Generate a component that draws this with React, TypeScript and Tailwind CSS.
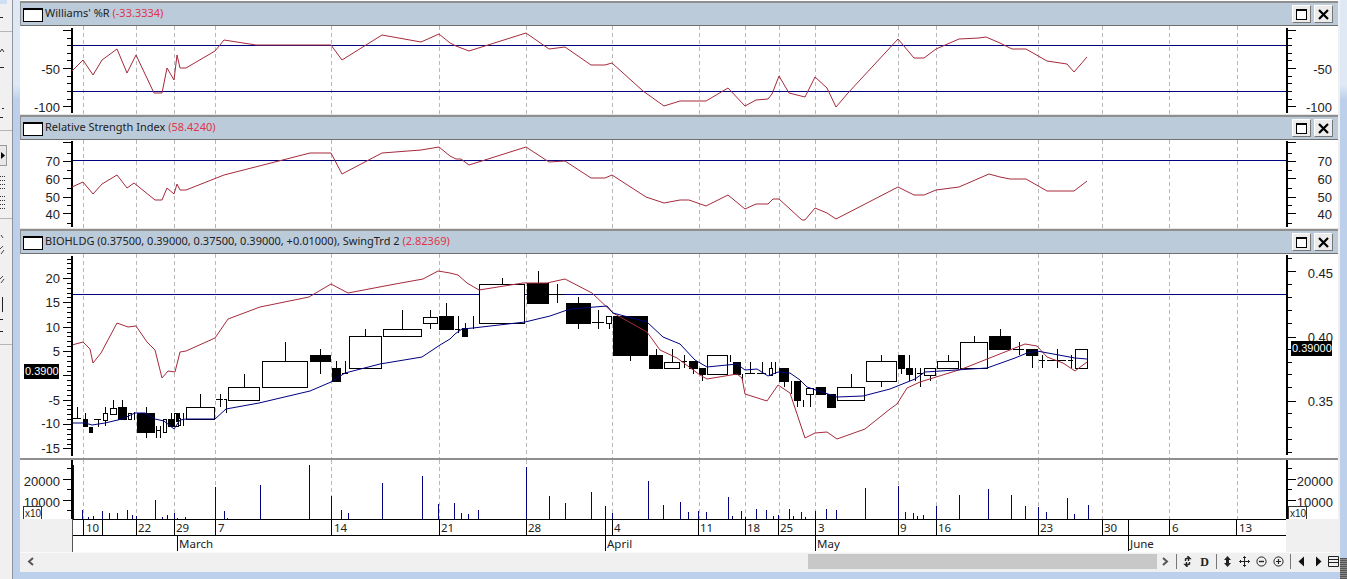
import React from 'react';

const FONT_AXIS = '"Liberation Sans", Arial, sans-serif';
const NAVY = '#000080';
const RED = '#a52a3c';

const gridX = [83, 136, 174, 215, 331, 439, 526, 612, 699, 745, 779, 815, 898, 936, 1038, 1102, 1169, 1237];

const williams = '72,71 83,60 93,75 102,60 117,49 127,73 136,55 154,93 162,93 167,68 174,80 177,55 180,68 186,68 215,51 224,40 256,45 331,45 342,60 382,35 421,42 439,34 450,43 456,46 469,51 526,33 549,49 565,47 591,65 605,65 612,63 643,91 664,106 680,101 706,101 728,88 745,106 756,100 768,99 772,94 779,76 789,93 805,97 815,77 827,88 836,107 848,93 873,66 898,39 914,58 924,58 936,49 959,39 979,38 986,37 1000,43 1012,49 1026,49 1047,61 1067,64 1074,72 1087,57';

const rsi = '72,187 83,182 93,194 102,184 117,175 127,188 134,183 155,200 162,200 167,188 174,194 177,184 180,190 186,190 224,175 310,153 331,153 342,174 382,153 421,150 439,147 450,156 456,159 461,159 469,165 526,147 549,162 565,161 591,178 605,178 612,175 646,197 664,203 680,200 689,200 706,206 728,195 745,209 756,204 768,204 773,199 779,199 802,220 805,220 815,208 827,213 836,219 898,187 914,195 924,195 936,190 959,187 989,174 1000,177 1010,179 1026,179 1047,191 1074,191 1087,181';

const swing = '72,345 83,342 90,349 93,363 101,353 117,323 128,327 136,326 147,342 155,350 162,378 168,371 175,372 180,352 186,351 215,338 228,319 260,307 309,297 331,284 348,293 390,285 423,279 438,271 450,273 458,275 467,283 479,290 523,283 547,283 565,279 592,293 613,313 647,332 660,350 677,358 700,375 707,379 737,374 742,378 745,394 767,401 778,385 790,393 805,438 815,433 827,432 837,439 865,429 890,409 897,404 907,388 920,382 962,369 1025,344 1037,346 1047,357 1063,363 1075,371 1087,362';

const average = '72,423 85,423 92,425 105,423 122,419 135,413 145,413 155,419 164,421 174,429 180,420 186,419 215,419 226,409 259,403 310,391 331,382 345,373 380,364 422,357 440,345 450,339 455,334 462,329 473,328 525,322 550,316 570,309 607,306 613,313 647,322 663,337 680,344 695,360 707,367 737,364 745,370 757,369 768,376 778,372 790,373 800,380 807,387 837,397 863,396 890,389 915,379 925,372 987,368 1015,358 1027,353 1037,351 1075,358 1087,359';

// left, right, body top, body bottom, wick top, wick bottom, filled
type Candle = [number, number, number, number, number, number, boolean?];

const candles: Candle[] = [
  [73, 81, 418, 418, 407, 418],
  [83, 87, 419, 426, 413, 426, true],
  [89, 92, 427, 432, 427, 432, true],
  [94, 101, 419, 419, 419, 427],
  [103, 107, 413, 420, 407, 426],
  [110, 116, 408, 414, 400, 414],
  [118, 126, 407, 419, 400, 419, true],
  [128, 131, 413, 419, 413, 419],
  [134, 134, 412, 420, 412, 420],
  [137, 154, 413, 432, 407, 438, true],
  [156, 156, 426, 438, 426, 438],
  [160, 160, 426, 438, 426, 438],
  [156, 160, 430, 430, 430, 430],
  [163, 166, 419, 432, 419, 432],
  [168, 173, 419, 426, 413, 426, true],
  [174, 178, 413, 426, 413, 426],
  [176, 179, 413, 421, 413, 421, true],
  [178, 180, 418, 425, 418, 425],
  [183, 183, 413, 426, 413, 426],
  [186, 214, 407, 419, 394, 419],
  [216, 223, 399, 399, 394, 407],
  [224, 227, 399, 399, 399, 413],
  [228, 259, 387, 400, 374, 400],
  [262, 307, 361, 387, 342, 387],
  [310, 330, 355, 361, 349, 374, true],
  [332, 340, 368, 381, 361, 381, true],
  [342, 348, 373, 373, 361, 373],
  [349, 381, 336, 368, 329, 368],
  [383, 421, 329, 336, 310, 336],
  [423, 437, 317, 323, 310, 329],
  [439, 453, 316, 329, 303, 329, true],
  [455, 460, 329, 329, 316, 333],
  [462, 467, 328, 336, 323, 336, true],
  [473, 473, 316, 329, 316, 329],
  [479, 524, 284, 323, 278, 323],
  [527, 548, 283, 303, 271, 303, true],
  [550, 564, 294, 294, 284, 303],
  [566, 590, 303, 323, 297, 329, true],
  [592, 604, 322, 322, 310, 329],
  [606, 611, 316, 323, 316, 329],
  [613, 647, 316, 355, 316, 361, true],
  [649, 662, 355, 368, 349, 368, true],
  [664, 679, 362, 368, 349, 368],
  [681, 687, 361, 361, 355, 368],
  [689, 697, 361, 368, 361, 374, true],
  [699, 705, 368, 374, 368, 381, true],
  [707, 727, 355, 374, 355, 374],
  [730, 730, 355, 362, 355, 362],
  [733, 740, 362, 374, 362, 374, true],
  [742, 742, 374, 381, 374, 381],
  [745, 755, 373, 373, 362, 373],
  [757, 766, 373, 373, 362, 374],
  [769, 772, 368, 375, 362, 375],
  [775, 775, 362, 374, 362, 374],
  [779, 788, 368, 381, 368, 387, true],
  [791, 791, 381, 394, 381, 394],
  [794, 800, 381, 400, 381, 407, true],
  [803, 803, 400, 407, 400, 407],
  [806, 813, 388, 394, 388, 407],
  [816, 825, 387, 394, 387, 394, true],
  [827, 835, 394, 407, 394, 407, true],
  [837, 864, 387, 400, 374, 400],
  [866, 896, 361, 381, 355, 387],
  [898, 904, 355, 368, 355, 374, true],
  [906, 912, 368, 374, 355, 381, true],
  [915, 915, 368, 381, 368, 381],
  [917, 923, 373, 373, 368, 387],
  [924, 935, 368, 375, 368, 381],
  [937, 958, 361, 368, 355, 368],
  [960, 987, 342, 368, 336, 368],
  [989, 1010, 336, 349, 329, 349, true],
  [1013, 1024, 349, 349, 342, 355],
  [1026, 1037, 349, 355, 349, 368, true],
  [1039, 1045, 360, 360, 355, 368],
  [1047, 1066, 360, 360, 349, 368],
  [1068, 1073, 360, 360, 355, 368],
  [1075, 1087, 349, 368, 349, 368],
];

const volume: [number, number][] = [
  [82, 510], [88, 517], [93, 516], [102, 511], [109, 513], [117, 513], [127, 510], [132, 515], [136, 516],
  [155, 500], [162, 517], [167, 515], [174, 513], [177, 518], [185, 517], [215, 487], [224, 511], [227, 518],
  [260, 485], [309, 465], [331, 496], [341, 510], [348, 513], [382, 483], [422, 476], [438, 504], [454, 503],
  [461, 513], [468, 514], [478, 510], [526, 467], [549, 496], [565, 503], [591, 492], [605, 506], [612, 513],
  [648, 481], [663, 505], [680, 502], [688, 512], [698, 511], [706, 512], [728, 497], [732, 516], [741, 511],
  [745, 517], [756, 509], [766, 510], [773, 516], [778, 515], [789, 509], [793, 516], [801, 512], [805, 517],
  [815, 511], [826, 509], [836, 510], [865, 488], [898, 486], [905, 512], [913, 513], [917, 516], [923, 515],
  [936, 506], [959, 495], [988, 489], [1011, 495], [1025, 506], [1038, 507], [1046, 512], [1067, 498],
  [1074, 514], [1088, 505],
];

const dayTicks = [83, 102, 136, 174, 215, 331, 439, 526, 605, 612, 698, 745, 778, 815, 898, 936, 1038, 1102, 1128, 1169, 1236];
const dayLabels: [number, string][] = [
  [86, '10'], [138, '22'], [176, '29'], [218, '7'], [334, '14'], [441, '21'], [528, '28'], [614, '4'], [700, '11'],
  [747, '18'], [780, '25'], [818, '3'], [900, '9'], [938, '16'], [1040, '23'], [1104, '30'], [1172, '6'], [1239, '13'],
];
const monthLabels: [number, string][] = [[177, 'March'], [605, 'April'], [815, 'May'], [1128, 'June']];

const pct = [30, 38, 45, 53, 60, 68, 76, 83, 91, 99, 106];
const rsiTicks = [142, 153, 161, 170, 178, 188, 197, 205, 213, 223];
const swingMajor = [278, 302, 327, 351, 375, 400, 424, 448];
const swingMinor = Array.from({ length: 40 }, (_, i) => 258.5 + i * 4.87);
const priceTicks = [258, 284, 297, 310, 323, 349, 362, 374, 387, 413, 427, 439, 452];

interface AxisProps {
  major: number[];
  minor: number[];
  y1: number;
  y2: number;
}

const Axis: React.FC<AxisProps & { side: 'left' | 'right' }> = ({ side, major, minor, y1, y2 }) => {
  const x = side === 'left' ? 71.5 : 1286.5;
  const dir = side === 'left' ? -1 : 1;
  return (
    <g stroke="#000" strokeWidth={1} shapeRendering="crispEdges">
      <line x1={x} x2={x} y1={y1} y2={y2} strokeWidth={2} />
      {minor.map((y) => (
        <line key={y} x1={x} x2={x + dir * 5} y1={Math.round(y) + 0.5} y2={Math.round(y) + 0.5} />
      ))}
      {major.map((y) => (
        <line key={y} x1={x} x2={x + dir * 9} y1={Math.round(y) + 0.5} y2={Math.round(y) + 0.5} />
      ))}
    </g>
  );
};

const Grid: React.FC<{ y1: number; y2: number }> = ({ y1, y2 }) => (
  <g stroke="#b8b8b8" strokeDasharray="4 3" shapeRendering="crispEdges">
    {gridX.map((x) => (
      <line key={x} x1={x + 0.5} x2={x + 0.5} y1={y1} y2={y2} />
    ))}
  </g>
);

const HLine: React.FC<{ y: number }> = ({ y }) => (
  <line x1={72} x2={1286} y1={y + 0.5} y2={y + 0.5} stroke={NAVY} shapeRendering="crispEdges" />
);

const Trace: React.FC<{ points: string; color: string }> = ({ points, color }) => (
  <polyline points={points} fill="none" stroke={color} strokeWidth={1} />
);

const Labels: React.FC<{ x: number; items: [number, string][] }> = ({ x, items }) => (
  <g fontFamily={FONT_AXIS} fontSize={13} fill="#222" textAnchor="end">
    {items.map(([y, label]) => (
      <text key={label} x={x} y={y + 5}>
        {label}
      </text>
    ))}
  </g>
);

const PaneButtons = () => (
  <div className="flex items-center gap-[3px]">
    <button className="flex h-[18px] w-[19px] items-center justify-center border border-t-white border-l-white border-r-[#777] border-b-[#777] bg-[#ececec]">
      <svg width="11" height="11" viewBox="0 0 11 11">
        <rect x="0.5" y="0.5" width="10" height="10" fill="#fff" stroke="#000" />
        <rect x="0" y="0" width="11" height="2" fill="#000" />
      </svg>
    </button>
    <button className="flex h-[18px] w-[19px] items-center justify-center border border-t-white border-l-white border-r-[#777] border-b-[#777] bg-[#ececec]">
      <svg width="11" height="11" viewBox="0 0 11 11">
        <path d="M1 1 L10 10 M10 1 L1 10" stroke="#000" strokeWidth="2.2" />
      </svg>
    </button>
  </div>
);

const PaneHeader: React.FC<{ title: string; value: string }> = ({ title, value }) => (
  <div
    className="flex h-[25px] items-center justify-between border-t-2 border-b border-t-[#8f8f8f] border-b-[#6f6f6f] bg-[#bccbd9] pr-[5px] pl-[2px] text-[11px] text-[#222]"
    style={{ fontFamily: '"Noto Sans", sans-serif' }}
  >
    <div className="flex items-center gap-[2px]">
      <svg width="20" height="14" viewBox="0 0 20 14" className="mt-[2px]">
        <rect x="0.5" y="0.5" width="19" height="13" fill="#fff" stroke="#000" />
        <rect x="0" y="0" width="20" height="2" fill="#000" />
      </svg>
      <span className="mb-[2px] whitespace-pre">
        {title} <span className="text-[#e0344c]">({value})</span>
      </span>
    </div>
    <PaneButtons />
  </div>
);

const Plot: React.FC<{ top: number; height: number; children: React.ReactNode }> = ({ top, height, children }) => (
  <svg width={1318} height={height} viewBox={`20 ${top} 1318 ${height}`} className="block bg-white">
    {children}
  </svg>
);

const CandleMark: React.FC<{ c: Candle }> = ({ c }) => {
  const [l, r, t, b, wt, wb, filled] = c;
  const mid = Math.round((l + r) / 2) + 0.5;
  const flat = t === b;
  return (
    <g shapeRendering="crispEdges" stroke="#000">
      {wt !== wb && <line x1={mid} x2={mid} y1={wt} y2={wb} />}
      {flat && <line x1={l} x2={r} y1={t + 0.5} y2={t + 0.5} />}
      {!flat && l !== r && (
        <rect x={l + 0.5} y={t + 0.5} width={r - l} height={b - t} fill={filled ? '#000' : '#fff'} />
      )}
    </g>
  );
};

const SideTools = () => (
  <svg width="12" height="579" viewBox="0 0 12 579" className="block shrink-0 bg-[#f0f0f0]">
    <rect x="0" y="0" width="7" height="4" fill="#cfe0f5" />
    <g stroke="#b5b5b5" shapeRendering="crispEdges">
      <line x1="0" x2="12" y1="31.5" y2="31.5" />
      <line x1="0" x2="12" y1="130.5" y2="130.5" />
      <line x1="0" x2="12" y1="218.5" y2="218.5" />
      <line x1="0" x2="12" y1="344.5" y2="344.5" />
    </g>
    <rect x="-1" y="145.5" width="7.5" height="20" fill="#e8e8e8" stroke="#999" />
    <path d="M1 152 L5 155.5 L1 159 Z" fill="#000" />
    <g stroke="#222" shapeRendering="crispEdges">
      <line x1="0" x2="3" y1="17.5" y2="17.5" />
      <line x1="0" x2="4" y1="67.5" y2="67.5" />
      <line x1="2" x2="4" y1="108.5" y2="108.5" />
      <line x1="0" x2="3" y1="117.5" y2="117.5" />
      <line x1="2.5" x2="2.5" y1="297" y2="312" />
      <line x1="0" x2="3" y1="319.5" y2="319.5" />
      <line x1="0" x2="3" y1="331.5" y2="331.5" />
    </g>
    <path d="M0 52 L2 49 L4 52" fill="none" stroke="#333" />
    <g stroke="#333" strokeDasharray="1 1" shapeRendering="crispEdges">
      {[176, 180, 184, 188, 196, 200, 204, 208].map((y) => (
        <line key={y} x1="0" x2="5" y1={y + 0.5} y2={y + 0.5} />
      ))}
    </g>
    <path d="M1 235 L3 238 M0 249 L3 246 M1 254 L4 250 M0 279 L3 276 M1 283 L4 279" fill="none" stroke="#444" />
  </svg>
);

const Tool: React.FC<{ children: React.ReactNode; className?: string }> = ({ children, className }) => (
  <div className={`flex items-center justify-center ${className ?? 'w-[17px]'}`}>{children}</div>
);

const Sep = () => (
  <div className="flex w-[6px] justify-center">
    <div className="h-[15px] w-px bg-[#777]" />
  </div>
);

const Icon: React.FC<{ children: React.ReactNode }> = ({ children }) => (
  <svg width="11" height="11" viewBox="0 0 11 11">
    {children}
  </svg>
);

const ScrollRow = () => (
  <div className="flex h-[19px] items-center bg-[#f0f0f0] pb-[2px]">
    <div className="flex w-[20px] justify-center">
      <svg width="7" height="9" viewBox="0 0 7 9">
        <path d="M6 1 L2 4.5 L6 8" fill="none" stroke="#555" strokeWidth="2" />
      </svg>
    </div>
    <div className="flex-1">
      <div className="ml-[768px] h-[15px] w-[349px] bg-[#c8c8c8]" />
    </div>
    <div className="flex w-[16px] justify-center">
      <svg width="7" height="9" viewBox="0 0 7 9">
        <path d="M1 1 L5 4.5 L1 8" fill="none" stroke="#555" strokeWidth="2" />
      </svg>
    </div>
    <Sep />
    <Tool>
      <Icon>
        <path d="M5.5 0 L8 2.5 L6.5 2.5 L6.5 5 M5.5 11 L3 8.5 L4.5 8.5 L4.5 6 M3.5 5 L3.5 3 L6 2 M7.5 6 L7.5 8 L5 9" fill="none" stroke="#222" strokeWidth="1.4" />
      </Icon>
    </Tool>
    <Tool>
      <span className="text-[12px] leading-none font-bold text-[#222]" style={{ fontFamily: '"Liberation Serif", serif' }}>
        D
      </span>
    </Tool>
    <Sep />
    <Tool>
      <Icon>
        <path d="M5.5 0 L9 4 L7 4 L7 7 L9 7 L5.5 11 L2 7 L4 7 L4 4 L2 4 Z" fill="#222" />
      </Icon>
    </Tool>
    <Tool>
      <Icon>
        <path d="M5.5 0.5 L5.5 10.5 M0.5 5.5 L10.5 5.5 M4 2 L5.5 0.5 L7 2 M4 9 L5.5 10.5 L7 9 M2 4 L0.5 5.5 L2 7 M9 4 L10.5 5.5 L9 7" fill="none" stroke="#222" />
      </Icon>
    </Tool>
    <Tool>
      <Icon>
        <circle cx="5.5" cy="5.5" r="4.6" fill="none" stroke="#222" />
        <path d="M3 5.5 L8 5.5" stroke="#222" strokeWidth="1.4" />
      </Icon>
    </Tool>
    <Tool>
      <Icon>
        <circle cx="5.5" cy="5.5" r="4.6" fill="none" stroke="#222" />
        <path d="M3 5.5 L8 5.5 M5.5 3 L5.5 8" stroke="#222" strokeWidth="1.2" />
      </Icon>
    </Tool>
    <Sep />
    <Tool>
      <Icon>
        <path d="M8 0.5 L8 10.5 L2.5 5.5 Z" fill="#111" />
      </Icon>
    </Tool>
    <Tool>
      <Icon>
        <path d="M3 0.5 L3 10.5 L8.5 5.5 Z" fill="#111" />
      </Icon>
    </Tool>
    <Tool className="w-[13px]">
      <Icon>
        <path d="M0.5 0.5 H10.5 V10.5 H0.5 Z M0.5 3.5 H10.5 M0.5 6.5 H10.5" fill="none" stroke="#222" />
      </Icon>
    </Tool>
  </div>
);

export default function App() {
  return (
    <div className="relative flex h-[579px] w-[1347px] overflow-hidden bg-white">
      <SideTools />
      <div className="w-px shrink-0 bg-[#8d949c]" />
      <div className="flex flex-1 flex-col bg-[linear-gradient(#dfe9f5_0px,#dfe9f5_85px,#bcd0eb_100px)] pr-[7px] pb-[7px] pl-[7px]">
        <div className="flex w-[1320px] flex-col bg-[#f0f0f0]">
          <div className="h-px bg-white" />
          <div className="w-[1318px] border-l border-[#8f8f8f]">
            <PaneHeader title="Williams' %R" value="-33.3334" />
          </div>
          <Plot top={26} height={88}>
            <Grid y1={26} y2={114} />
            <HLine y={45} />
            <HLine y={91} />
            <Axis side="left" major={[30, 68, 106]} minor={pct} y1={28} y2={113} />
            <Axis side="right" major={[30, 68, 106]} minor={pct} y1={28} y2={113} />
            <Trace points={williams} color={RED} />
            <Labels x={60} items={[[69, '-50'], [107, '-100']]} />
            <Labels x={1332} items={[[69, '-50'], [107, '-100']]} />
          </Plot>
          <div className="h-px bg-[#e4e4e4]" />
          <div className="w-[1318px] border-l border-[#8f8f8f]">
            <PaneHeader title="Relative Strength Index" value="58.4240" />
          </div>
          <Plot top={140} height={88}>
            <Grid y1={140} y2={228} />
            <HLine y={160} />
            <Axis side="left" major={[142, 161, 178, 197, 213]} minor={rsiTicks} y1={141} y2={227} />
            <Axis side="right" major={[142, 161, 178, 197, 213]} minor={rsiTicks} y1={141} y2={227} />
            <Trace points={rsi} color={RED} />
            <Labels x={60} items={[[161, '70'], [179, '60'], [197, '50'], [214, '40']]} />
            <Labels x={1332} items={[[161, '70'], [179, '60'], [197, '50'], [214, '40']]} />
          </Plot>
          <div className="h-px bg-[#e4e4e4]" />
          <div className="w-[1318px] border-l border-[#8f8f8f]">
            <PaneHeader title="BIOHLDG (0.37500, 0.39000, 0.37500, 0.39000, +0.01000), SwingTrd 2" value="2.82369" />
          </div>
          <Plot top={254} height={204}>
            <Grid y1={254} y2={458} />
            <HLine y={294} />
            {candles.map((c, i) => (
              <CandleMark key={i} c={c} />
            ))}
            <Trace points={swing} color={RED} />
            <Trace points={average} color={NAVY} />
            <Axis side="left" major={swingMajor} minor={swingMinor} y1={256} y2={456} />
            <Axis side="right" major={[271, 337, 401]} minor={priceTicks} y1={255} y2={455} />
            <Labels x={60} items={[[278, '20'], [302, '15'], [327, '10'], [351, '5'], [400, '-5'], [423, '-10'], [448, '-15']]} />
            <Labels x={1333} items={[[273, '0.45'], [337, '0.40'], [401, '0.35']]} />
            <rect x={24} y={364} width={35} height={15} fill="#000" />
            <text x={25} y={375} fontFamily={FONT_AXIS} fontSize={11} fill="#fff">
              0.3900
            </text>
            <rect x={1291} y={341} width={41} height={15} fill="#000" />
            <text x={1292} y={352} fontFamily={FONT_AXIS} fontSize={11} fill="#fff">
              0.39000
            </text>
          </Plot>
          <div className="h-[2px] w-[1318px] bg-[#8f8f8f]" />
          <Plot top={460} height={59}>
            <Grid y1={460} y2={519} />
            <g stroke={NAVY} shapeRendering="crispEdges">
              <line x1={72.5} x2={72.5} y1={465} y2={519} strokeWidth={2} />
              {volume.map(([x, y]) => (
                <line key={x} x1={x + 0.5} x2={x + 0.5} y1={y} y2={519} />
              ))}
            </g>
            <Axis side="left" major={[479, 500]} minor={[468, 489, 510]} y1={460} y2={519} />
            <Axis side="right" major={[479, 500]} minor={[468, 489, 510]} y1={460} y2={519} />
            <Labels x={60} items={[[481, '20000'], [502, '10000']]} />
            <Labels x={1333} items={[[481, '20000'], [502, '10000']]} />
            <g fontFamily={FONT_AXIS} fontSize={10} fill="#222">
              <rect x={23.5} y={506.5} width={18} height={13} fill="#fff" stroke="#333" shapeRendering="crispEdges" />
              <text x={25} y={517}>x10</text>
              <rect x={1288.5} y={506.5} width={18} height={13} fill="#fff" stroke="#333" shapeRendering="crispEdges" />
              <text x={1290} y={517}>x10</text>
            </g>
          </Plot>
          <div className="flex h-[33px]">
            <div className="w-[52px] bg-[#f0f0f0]" />
            <svg width={1214} height={33} viewBox="72 519 1214 33" className="block bg-white">
              <g stroke="#000" shapeRendering="crispEdges">
                <line x1={72} x2={1286} y1={519.5} y2={519.5} />
                <line x1={72} x2={1286} y1={535.5} y2={535.5} />
                <line x1={72.5} x2={72.5} y1={519} y2={552} stroke="#555" />
                {dayTicks.map((x) => (
                  <line key={x} x1={x + 0.5} x2={x + 0.5} y1={519} y2={535} />
                ))}
                {monthLabels.map(([x]) => (
                  <line key={x} x1={x + 0.5} x2={x + 0.5} y1={535} y2={551} />
                ))}
              </g>
              <g fontFamily={'"Noto Sans", sans-serif'} fontSize={11.5} fill="#222">
                {dayLabels.map(([x, label]) => (
                  <text key={label} x={x} y={532}>
                    {label}
                  </text>
                ))}
                {monthLabels.map(([x, label]) => (
                  <text key={label} x={x + 2} y={548}>
                    {label}
                  </text>
                ))}
              </g>
            </svg>
            <div className="w-[54px] bg-[#f0f0f0]" />
          </div>
          <div className="h-px bg-[#fafafa]" />
          <ScrollRow />
        </div>
      </div>
      <div className="absolute right-0 bottom-0 h-[21px] w-[7px] bg-[repeating-linear-gradient(#555_0px,#555_1px,#888_1px,#888_2px)]" />
    </div>
  );
}
